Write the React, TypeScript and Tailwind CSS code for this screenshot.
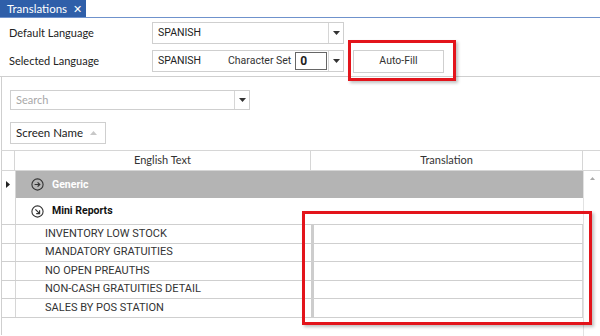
import { ReactNode } from "react";

const rows = [
  "INVENTORY LOW STOCK",
  "MANDATORY GRATUITIES",
  "NO OPEN PREAUTHS",
  "NON-CASH GRATUITIES DETAIL",
  "SALES BY POS STATION",
];

const rowHeights = ["h-[19px]", "h-[18px]", "h-[19px]", "h-[18px]", "h-[19px]"];

function Caret() {
  return (
    <svg width="7" height="4" viewBox="0 0 7 4" className="block">
      <path d="M0 0h7L3.5 4z" fill="#333" />
    </svg>
  );
}

function DropArrow({ className = "" }: { className?: string }) {
  return (
    <div className={`flex w-[15px] items-center justify-center border-l border-[#d6d6d6] ${className}`}>
      <Caret />
    </div>
  );
}

function CircleIcon({ dir }: { dir: "right" | "down" }) {
  return (
    <svg width="13" height="13" viewBox="0 0 13 13" className="block">
      <circle cx="6.5" cy="6.5" r="5.6" fill="none" stroke="#333" strokeWidth="1.1" />
      {dir === "right" ? (
        <path d="M3.6 6.5h5.2M6.6 4.3l2.2 2.2-2.2 2.2" fill="none" stroke="#333" strokeWidth="1.2" />
      ) : (
        <path d="M4.4 4.4l4 4M8.6 5.2v3.4H5.2" fill="none" stroke="#333" strokeWidth="1.2" />
      )}
    </svg>
  );
}

function Label({ children }: { children: ReactNode }) {
  return <div className="w-[143px] whitespace-nowrap text-[11px] text-[#222]">{children}</div>;
}

export default function App() {
  return (
    <div className="relative h-[336px] w-[600px] overflow-hidden whitespace-nowrap bg-white font-['Lato',sans-serif] text-[#222]">
      {/* tab strip */}
      <div className="flex h-[18px] border-b border-[#6f92cc]">
        <div className="flex w-[86px] items-center gap-[6px] bg-[#2f5fa9] pl-[7px] text-[11.5px] text-white">
          <span>Translations</span>
          <span className="text-[11px] leading-none">✕</span>
        </div>
      </div>

      {/* language form */}
      <div className="flex h-[59px] flex-col gap-[6px] border-b border-[#cfcfcf] pl-[9px] pt-[4px]">
        <div className="flex h-[22px] items-center">
          <Label>Default Language</Label>
          <div className="flex h-[22px] w-[192px] border border-[#cfcfcf]">
            <div className="flex flex-1 items-center pl-[5px] font-['Roboto',sans-serif] text-[10.5px]">SPANISH</div>
            <DropArrow />
          </div>
        </div>
        <div className="flex h-[22px] items-center">
          <Label>Selected Language</Label>
          <div className="flex h-[22px] w-[192px] border border-[#cfcfcf]">
            <div className="flex flex-1 items-center pl-[5px] font-['Roboto',sans-serif] text-[10.5px]">
              <span className="w-[70px]">SPANISH</span>
              <span className="text-[#333]">Character Set</span>
              <div className="ml-[4px] flex h-[18px] w-[32px] items-center border border-[#666] pl-[4px] text-[12px] font-bold">
                0
              </div>
            </div>
            <DropArrow />
          </div>
          <div className="ml-[9px] flex h-[23px] w-[91px] items-center justify-center border border-[#cfcfcf] bg-white font-['Roboto',sans-serif] text-[10.5px] text-[#333]">
            Auto-Fill
          </div>
        </div>
      </div>

      {/* lower panel */}
      <div className="ml-[1px] h-[258px] border-l border-[#cfcfcf] pl-[8px] pt-[13px]">
        <div className="flex h-[20px] w-[240px] border border-[#cfcfcf]">
          <div className="flex flex-1 items-center pl-[5px] text-[11px] text-[#a8a8a8]">Search</div>
          <DropArrow />
        </div>
        <div className="mt-[12px] flex h-[22px] w-[96px] items-center justify-between border border-[#cfcfcf] pl-[5px] pr-[8px] text-[11.5px]">
          <span>Screen Name</span>
          <svg width="7" height="4" viewBox="0 0 7 4">
            <path d="M3.5 0L7 4H0z" fill="#c8c8c8" />
          </svg>
        </div>
      </div>

      {/* grid */}
      <div className="absolute left-[1px] top-[150px] w-[599px]">
        <div className="flex h-[21px] border-y border-[#d6d6d6] text-[11px] text-[#333]">
          <div className="w-[14px] border-r border-[#d6d6d6]" />
          <div className="flex w-[296px] items-center justify-center border-r border-[#d6d6d6]">English Text</div>
          <div className="flex w-[272px] items-center justify-center border-r border-[#d6d6d6]">Translation</div>
          <div className="flex-1" />
        </div>
        <div className="flex">
          <div className="w-[582px]">
            <div className="flex h-[27px]">
              <div className="flex w-[15px] items-center justify-center border-r border-[#d6d6d6]">
                <svg width="4" height="7" viewBox="0 0 4 7">
                  <path d="M0 0l4 3.5L0 7z" fill="#222" />
                </svg>
              </div>
              <div className="flex flex-1 items-center gap-[8px] bg-[#b4b4b4] pl-[15px] font-['Roboto',sans-serif] text-[10.5px] font-bold text-white">
                <CircleIcon dir="right" />
                <span>Generic</span>
              </div>
            </div>
            <div className="flex h-[27px] border-b border-[#cfcfcf]">
              <div className="w-[15px] border-r border-[#d6d6d6]" />
              <div className="flex flex-1 items-center gap-[8px] pl-[15px] font-['Roboto',sans-serif] text-[10.5px] font-bold text-[#111]">
                <CircleIcon dir="down" />
                <span>Mini Reports</span>
              </div>
            </div>
            {rows.map((r, i) => (
              <div key={r} className={`flex border-b border-[#cfcfcf] ${rowHeights[i]}`}>
                <div className="w-[15px] border-r border-[#d6d6d6]" />
                <div className="flex w-[295px] items-center pl-[29px] font-['Roboto',sans-serif] text-[11px] text-[#333]">
                  {r}
                </div>
                <div className="w-[3px] bg-[#cdcdcd]" />
                <div className="flex-1 border-r border-[#d6d6d6]" />
              </div>
            ))}
          </div>
          <div className="flex h-[185px] flex-1 flex-col items-center justify-between border-l border-[#e2e2e2] pb-[3px] pt-[6px]">
            <svg width="5" height="3" viewBox="0 0 5 3">
              <path d="M2.5 0L5 3H0z" fill="#aaa" />
            </svg>
            <svg width="5" height="3" viewBox="0 0 5 3">
              <path d="M0 0h5L2.5 3z" fill="#aaa" />
            </svg>
          </div>
        </div>
      </div>

      {/* annotation highlights */}
      <div className="absolute left-[348px] top-[40px] h-[41px] w-[108px] border-[3px] border-[#e3141b] shadow-[2px_2px_3px_rgba(0,0,0,0.25)]" />
      <div className="absolute left-[302px] top-[211px] h-[114px] w-[290px] border-[3px] border-[#e3141b] shadow-[2px_2px_3px_rgba(0,0,0,0.25)]" />
    </div>
  );
}
